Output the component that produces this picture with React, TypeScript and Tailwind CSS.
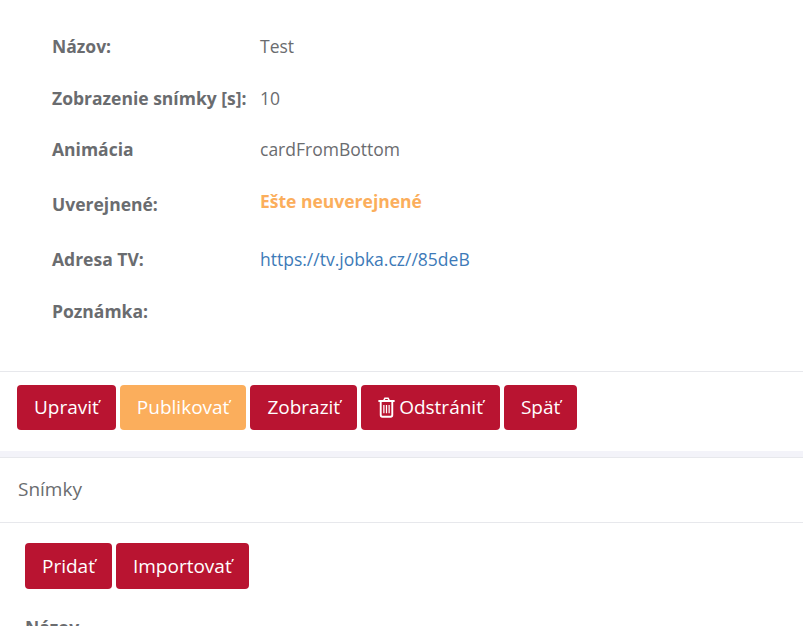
const rows = [
  { label: "Názov:", value: "Test", height: "h-[52px]" },
  { label: "Zobrazenie snímky [s]:", value: "10", height: "h-[51px]" },
  { label: "Animácia", value: "cardFromBottom", height: "h-[52px]" },
];

function Btn({ children, orange }: { children: React.ReactNode; orange?: boolean }) {
  return (
    <button
      className={`flex h-[45px] items-center rounded-[4px] px-[17px] text-[19px] text-white ${
        orange ? "bg-[#fbae5c]" : "bg-[#b91431]"
      }`}
    >
      {children}
    </button>
  );
}

function TrashIcon() {
  return (
    <svg width="17" height="21" viewBox="0 0 16 20" fill="none" stroke="currentColor" className="mr-[4px]">
      <path d="M5.5 3.2 6.5 1.2h3l1 2" strokeWidth="1.5" />
      <path d="M1 3.8h14" strokeWidth="2" strokeLinecap="round" />
      <path d="M2.5 4v13.2c0 1 .6 1.6 1.6 1.6h7.8c1 0 1.6-.6 1.6-1.6V4" strokeWidth="1.8" />
      <path d="M5.5 7.5v8M8 7.5v8M10.5 7.5v8" strokeWidth="1.2" />
    </svg>
  );
}

export default function App() {
  return (
    <div className="h-[626px] w-[803px] overflow-hidden bg-white font-['Open_Sans',sans-serif] text-[17.5px] text-[#6a6c6f]">
      <div className="h-[371px] px-[52px] pt-[21px]">
        {rows.map((r) => (
          <div key={r.label} className={`flex items-start ${r.height}`}>
            <div className="h-[50px] w-[208px] font-bold leading-[50px]">{r.label}</div>
            <div className="leading-[50px]">{r.value}</div>
          </div>
        ))}
        <div className="flex h-[57px] items-start">
          <div className="w-[208px] font-bold leading-[56px]">Uverejnené:</div>
          <div className="font-bold leading-[50px] text-[#fbae5c]">Ešte neuverejnené</div>
        </div>
        <div className="flex h-[52px]">
          <div className="w-[208px] font-bold leading-[52px]">Adresa TV:</div>
          <a className="leading-[52px] text-[#3d7ab8]">https://tv.jobka.cz//85deB</a>
        </div>
        <div className="flex">
          <div className="w-[208px] font-bold leading-[52px]">Poznámka:</div>
        </div>
      </div>

      <div className="flex h-[80px] items-start gap-[4px] border-t border-[#e7e8ec] px-[17px] pt-[13px]">
        <Btn>Upraviť</Btn>
        <Btn orange>Publikovať</Btn>
        <Btn>Zobraziť</Btn>
        <Btn>
          <TrashIcon />
          Odstrániť
        </Btn>
        <Btn>Späť</Btn>
      </div>

      <div className="h-[7px] border-b border-[#e7e8ec] bg-[#f3f3f9]" />

      <div className="flex h-[65px] items-center border-b border-[#e7e8ec] px-[18px] pb-[2px] text-[19px] font-medium text-[#6a6c6f]">Snímky</div>

      <div className="flex gap-[4px] px-[25px] pt-[20px]">
        <button className="flex h-[46px] items-center rounded-[4px] bg-[#b91431] px-[17px] text-[19px] text-white">Pridať</button>
        <button className="flex h-[46px] items-center rounded-[4px] bg-[#b91431] px-[17px] text-[19px] text-white">Importovať</button>
      </div>

      <div className="px-[25px] pt-[25px] font-bold">Názov</div>
    </div>
  );
}
